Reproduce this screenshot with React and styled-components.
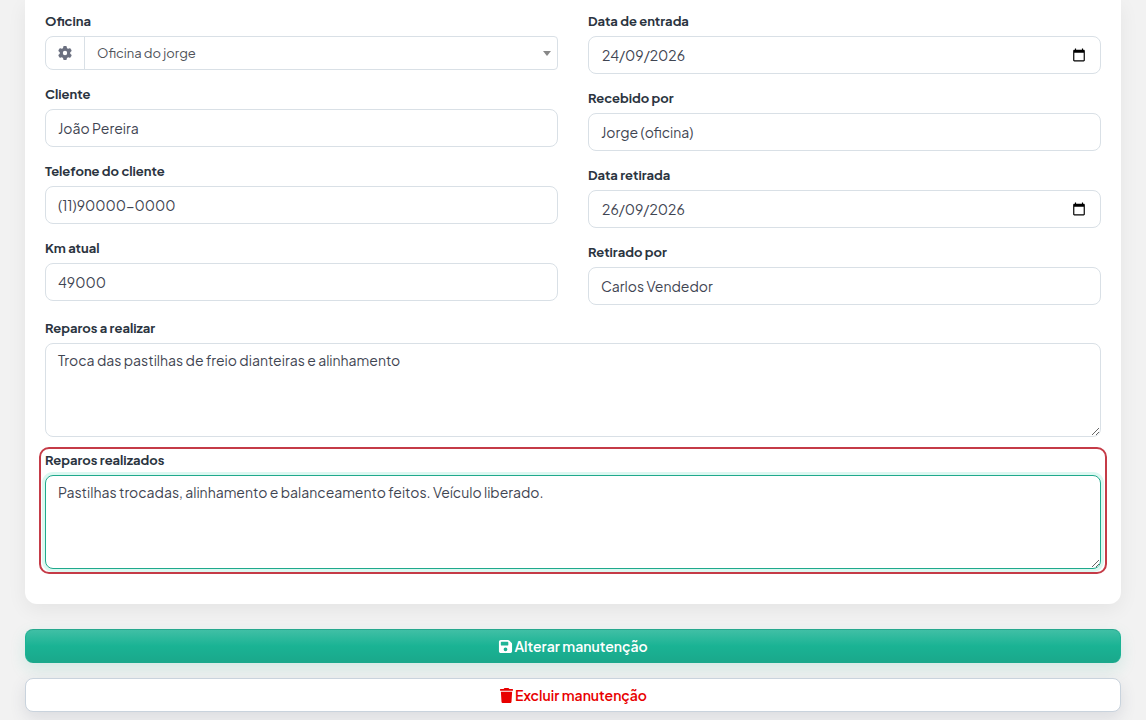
import { useState } from 'react';
import styled, { createGlobalStyle, css } from 'styled-components';
import { FaGear, FaFloppyDisk, FaTrash } from 'react-icons/fa6';


const GlobalStyle = createGlobalStyle`
    *, *::before, *::after {
        box-sizing: border-box;
    }
    body {
        margin: 0;
        background: #f2f2f2;
        color: #3f4552;
        font-family: "Plus Jakarta Sans", Inter, "Open Sans", sans-serif;
        font-size: 14px;
        line-height: 20px;
    }
    input, select, textarea, button {
        font: inherit;
        color: inherit;
    }
`;

const Page = styled.main`
    padding: 0 25px 8px;
`;
const Card = styled.section`
    display: flex;
    flex-direction: column;
    gap: 13px;
    padding: 11px 20px 35px;
    background: #fff;
    border-radius: 0 0 12px 12px;
    box-shadow: 0 6px 20px rgba(0, 0, 0, 0.06);
`;
const Columns = styled.div`
    display: grid;
    grid-template-columns: 1fr 1fr;
    gap: 30px;
    align-items: start;
`;
const Column = styled.div`
    display: flex;
    flex-direction: column;
    gap: 14px;
`;
const Field = styled.div`
    position: relative;
    display: flex;
    flex-direction: column;
    gap: 5px;

    ${({ $marked }) => $marked && css`
        &::after {
            content: "";
            position: absolute;
            inset: -3px -6px -5px;
            border: 2px solid #c53b47;
            border-radius: 10px;
            pointer-events: none;
        }
    `}
`;
const Label = styled.label`
    align-self: flex-start;
    font-size: 13px;
    font-weight: 700;
    line-height: 20px;
    color: #2b3440;
`;
const control = css`
    width: 100%;
    border: 1px solid #d9e0e6;
    border-radius: 8px;
    background: #fff;
    outline: none;
`;
const Input = styled.input`
    ${control}
    height: 38px;
    padding: 0 12px;
`;
const Textarea = styled.textarea`
    ${control}
    display: block;
    height: 94px;
    padding: 6px 12px;
    resize: vertical;

    ${({ $active }) => $active && css`
        border-color: #1fa98c;
        box-shadow: 0 0 0 3px #dcf8f1;
    `}
`;
const DateBox = styled.div`
    ${control}
    display: flex;
    align-items: center;
    height: 38px;
    padding: 0 14px 0 13px;
`;
const DateText = styled.input`
    flex: 1;
    min-width: 0;
    padding: 0;
    border: 0;
    background: none;
    outline: none;
`;
const DateButton = styled.button`
    display: flex;
    padding: 0;
    border: 0;
    background: none;
    color: #000;
    cursor: pointer;
`;
const SelectGroup = styled.div`
    ${control}
    position: relative;
    display: flex;
    height: 34px;
    border-radius: 8px 4px 4px 8px;

    &::after {
        content: "";
        position: absolute;
        top: 14px;
        right: 6px;
        border: 4px solid transparent;
        border-top: 5px solid #888;
        border-bottom: 0;
        pointer-events: none;
    }
`;
const Addon = styled.span`
    display: flex;
    align-items: center;
    justify-content: center;
    width: 39px;
    border-right: 1px solid #d9e0e6;
    color: #6b7080;
    font-size: 14px;
`;
const Select = styled.select`
    flex: 1;
    min-width: 0;
    padding: 0 12px;
    border: 0;
    background: none;
    appearance: none;
    outline: none;
    color: #50535a;
    font-size: 13px;
`;
const Actions = styled.div`
    display: flex;
    flex-direction: column;
    gap: 15px;
    margin-top: 25px;
`;
const Button = styled.button`
    display: flex;
    align-items: center;
    justify-content: center;
    gap: 1px;
    height: 34px;
    border: 1px solid #c9d3dd;
    border-radius: 8px;
    background: #fff;
    box-shadow: 0 6px 16px rgba(60, 70, 100, 0.13);
    color: #e80000;
    font-weight: 600;
    cursor: pointer;

    svg {
        font-size: 15px;
    }

    ${({ $primary }) => $primary && css`
        border-color: #25a88d #1ab394 #1aa98c;
        background: linear-gradient(#40bfa5, #1ab394 50%, #1aa88b);
        box-shadow: 0 6px 16px rgba(26, 179, 148, 0.15);
        color: #fff;
    `}
`;

const CalendarIcon = () => (
    <svg width="14" height="14" viewBox="0 0 24 24" fill="currentColor" aria-hidden="true">
        <path d="M20 3h-1V1h-2v2H7V1H5v2H4c-1.1 0-2 .9-2 2v16c0 1.1.9 2 2 2h16c1.1 0 2-.9 2-2V5c0-1.1-.9-2-2-2zm0 18H4V8h16v13z" />
    </svg>
);

const TextField = ({ id, label, value }) => (
    <Field>
        <Label htmlFor={id}>{label}</Label>
        <Input id={id} type="text" defaultValue={value} />
    </Field>
);

// dd/mm/aaaa whatever the browser locale is
const DateField = ({ id, label, value }) => (
    <Field>
        <Label htmlFor={id}>{label}</Label>
        <DateBox>
            <DateText id={id} type="text" inputMode="numeric" defaultValue={value} />
            <DateButton type="button" aria-label="Abrir calendário"><CalendarIcon /></DateButton>
        </DateBox>
    </Field>
);

const App = () => {

    const [reparos, setReparos] = useState('Pastilhas trocadas, alinhamento e balanceamento feitos. Veículo liberado.');

    return (
        <>
            <GlobalStyle />
            <Page>
                <form onSubmit={(e) => e.preventDefault()}>
                    <Card>
                        <Columns>
                            <Column>
                                <Field>
                                    <Label htmlFor="oficina">Oficina</Label>
                                    <SelectGroup>
                                        <Addon><FaGear /></Addon>
                                        <Select id="oficina">
                                            <option>Oficina do jorge</option>
                                        </Select>
                                    </SelectGroup>
                                </Field>
                                <TextField id="cliente" label="Cliente" value="João Pereira" />
                                <TextField id="telefone" label="Telefone do cliente" value="(11)90000-0000" />
                                <TextField id="km" label="Km atual" value="49000" />
                            </Column>
                            <Column>
                                <DateField id="entrada" label="Data de entrada" value="24/09/2026" />
                                <TextField id="recebido" label="Recebido por" value="Jorge (oficina)" />
                                <DateField id="retirada" label="Data retirada" value="26/09/2026" />
                                <TextField id="retirado" label="Retirado por" value="Carlos Vendedor" />
                            </Column>
                        </Columns>
                        <Field>
                            <Label htmlFor="realizar">Reparos a realizar</Label>
                            <Textarea id="realizar" defaultValue="Troca das pastilhas de freio dianteiras e alinhamento" />
                        </Field>
                        <Field $marked>
                            <Label htmlFor="realizados">Reparos realizados</Label>
                            <Textarea
                                id="realizados"
                                $active
                                value={reparos}
                                onChange={(e) => setReparos(e.target.value)}
                            />
                        </Field>
                    </Card>
                    <Actions>
                        <Button type="submit" $primary><FaFloppyDisk />Alterar manutenção</Button>
                        <Button type="button"><FaTrash />Excluir manutenção</Button>
                    </Actions>
                </form>
            </Page>
        </>
    );
};

export default App;
